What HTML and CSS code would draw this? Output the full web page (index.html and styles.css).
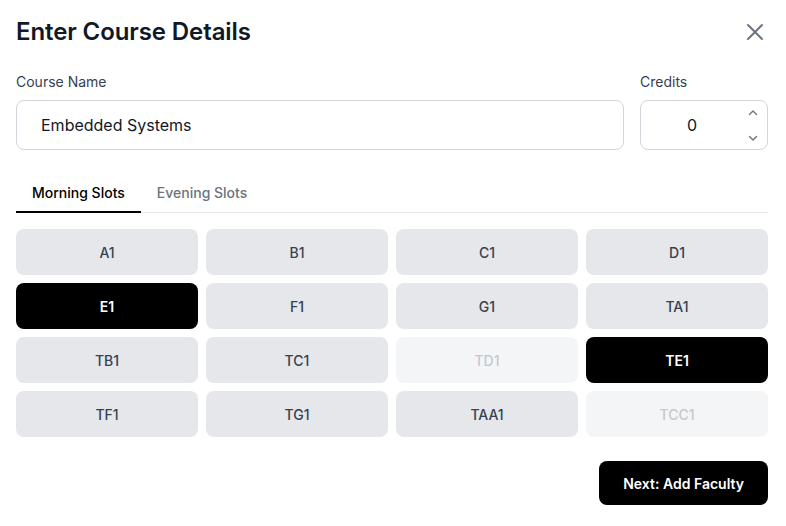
FILE: index.html
```html
<!DOCTYPE html>
<html lang="en">
<head>
<meta charset="utf-8">
<title>Enter Course Details</title>
<link rel="stylesheet" href="styles.css">
</head>
<body>
<div class="dialog">
  <div class="header">
    <h1 class="title">Enter Course Details</h1>
    <button class="close" aria-label="Close">
      <svg width="24" height="24" viewBox="0 0 24 24"><path d="M5 5 L19 19 M19 5 L5 19" stroke="#6b7280" stroke-width="2" stroke-linecap="round" fill="none"/></svg>
    </button>
  </div>

  <div class="fields">
    <div class="field field-name">
      <label class="label">Course Name</label>
      <div class="input">Embedded Systems</div>
    </div>
    <div class="field field-credits">
      <label class="label">Credits</label>
      <div class="input input-number">
        <span class="num">0</span>
        <span class="spin">
          <svg width="12" height="8" viewBox="0 0 12 8"><path d="M2.5 5.5 L6 2 L9.5 5.5" stroke="#6b7280" stroke-width="1.4" fill="none" stroke-linecap="round" stroke-linejoin="round"/></svg>
          <svg width="12" height="8" viewBox="0 0 12 8"><path d="M2.5 2.5 L6 6 L9.5 2.5" stroke="#6b7280" stroke-width="1.4" fill="none" stroke-linecap="round" stroke-linejoin="round"/></svg>
        </span>
      </div>
    </div>
  </div>

  <div class="tabs">
    <div class="tab active">Morning Slots</div>
    <div class="tab">Evening Slots</div>
  </div>

  <div class="grid">
    <div class="slot">A1</div>
    <div class="slot">B1</div>
    <div class="slot">C1</div>
    <div class="slot">D1</div>
    <div class="slot selected">E1</div>
    <div class="slot">F1</div>
    <div class="slot">G1</div>
    <div class="slot">TA1</div>
    <div class="slot">TB1</div>
    <div class="slot">TC1</div>
    <div class="slot disabled">TD1</div>
    <div class="slot selected">TE1</div>
    <div class="slot">TF1</div>
    <div class="slot">TG1</div>
    <div class="slot">TAA1</div>
    <div class="slot disabled">TCC1</div>
  </div>

  <div class="footer">
    <button class="next">Next: Add Faculty</button>
  </div>
</div>
</body>
</html>
```

FILE: styles.css
```css
* { box-sizing: border-box; }

html, body {
  margin: 0;
  padding: 0;
  background: #ffffff;
}

body {
  font-family: Inter, "Noto Sans", "Liberation Sans", sans-serif;
  color: #111827;
}

.dialog {
  padding: 16px 18px 20px 16px;
}

.header {
  display: flex;
  justify-content: space-between;
  align-items: center;
}

.title {
  margin: 0;
  font-size: 24px;
  line-height: 32px;
  font-weight: 600;
  color: #111827;
  letter-spacing: -0.1px;
}

.close {
  width: 24px;
  height: 24px;
  padding: 0;
  margin-right: 1px;
  border: none;
  background: none;
  display: flex;
  align-items: center;
  justify-content: center;
}

.fields {
  display: flex;
  gap: 16px;
  margin-top: 24px;
}

.field {
  display: flex;
  flex-direction: column;
  gap: 8px;
}

.field-name { flex: 1; }
.field-credits { width: 128px; }

.label {
  font-size: 14px;
  line-height: 20px;
  color: #374151;
  font-weight: 400;
}

.input {
  height: 50px;
  border: 1px solid #d1d5db;
  border-radius: 8px;
  padding: 0 24px;
  display: flex;
  align-items: center;
  font-size: 16px;
  color: #111827;
}

.input-number {
  padding: 0 4px 0 0;
}

.num {
  flex: 1;
  text-align: center;
}

.spin {
  width: 20px;
  display: flex;
  flex-direction: column;
  align-items: center;
  gap: 17px;
}

.spin svg { display: block; }

.tabs {
  display: flex;
  margin-top: 25px;
  border-bottom: 1px solid #e5e7eb;
}

.tab {
  padding: 8px 16px 8px;
  font-size: 14px;
  line-height: 20px;
  font-weight: 500;
  color: #6b7280;
  border-bottom: 2px solid transparent;
  margin-bottom: -1px;
}

.tab.active {
  color: #000000;
  border-bottom-color: #000000;
}

.grid {
  display: grid;
  grid-template-columns: repeat(4, 1fr);
  gap: 8px;
  margin-top: 16px;
}

.slot {
  height: 46px;
  border-radius: 8px;
  background: #e5e7eb;
  color: #374151;
  font-size: 14px;
  font-weight: 500;
  display: flex;
  align-items: center;
  justify-content: center;
}

.slot.selected {
  background: #000000;
  color: #ffffff;
  font-weight: 600;
}

.slot.disabled {
  background: #f4f5f7;
  color: #c4c8cf;
}

.footer {
  display: flex;
  justify-content: flex-end;
  margin-top: 24px;
}

.next {
  font-family: inherit;
  height: 44px;
  padding: 0 24px;
  border: none;
  border-radius: 8px;
  background: #000000;
  color: #ffffff;
  font-size: 14px;
  font-weight: 600;
}
```
